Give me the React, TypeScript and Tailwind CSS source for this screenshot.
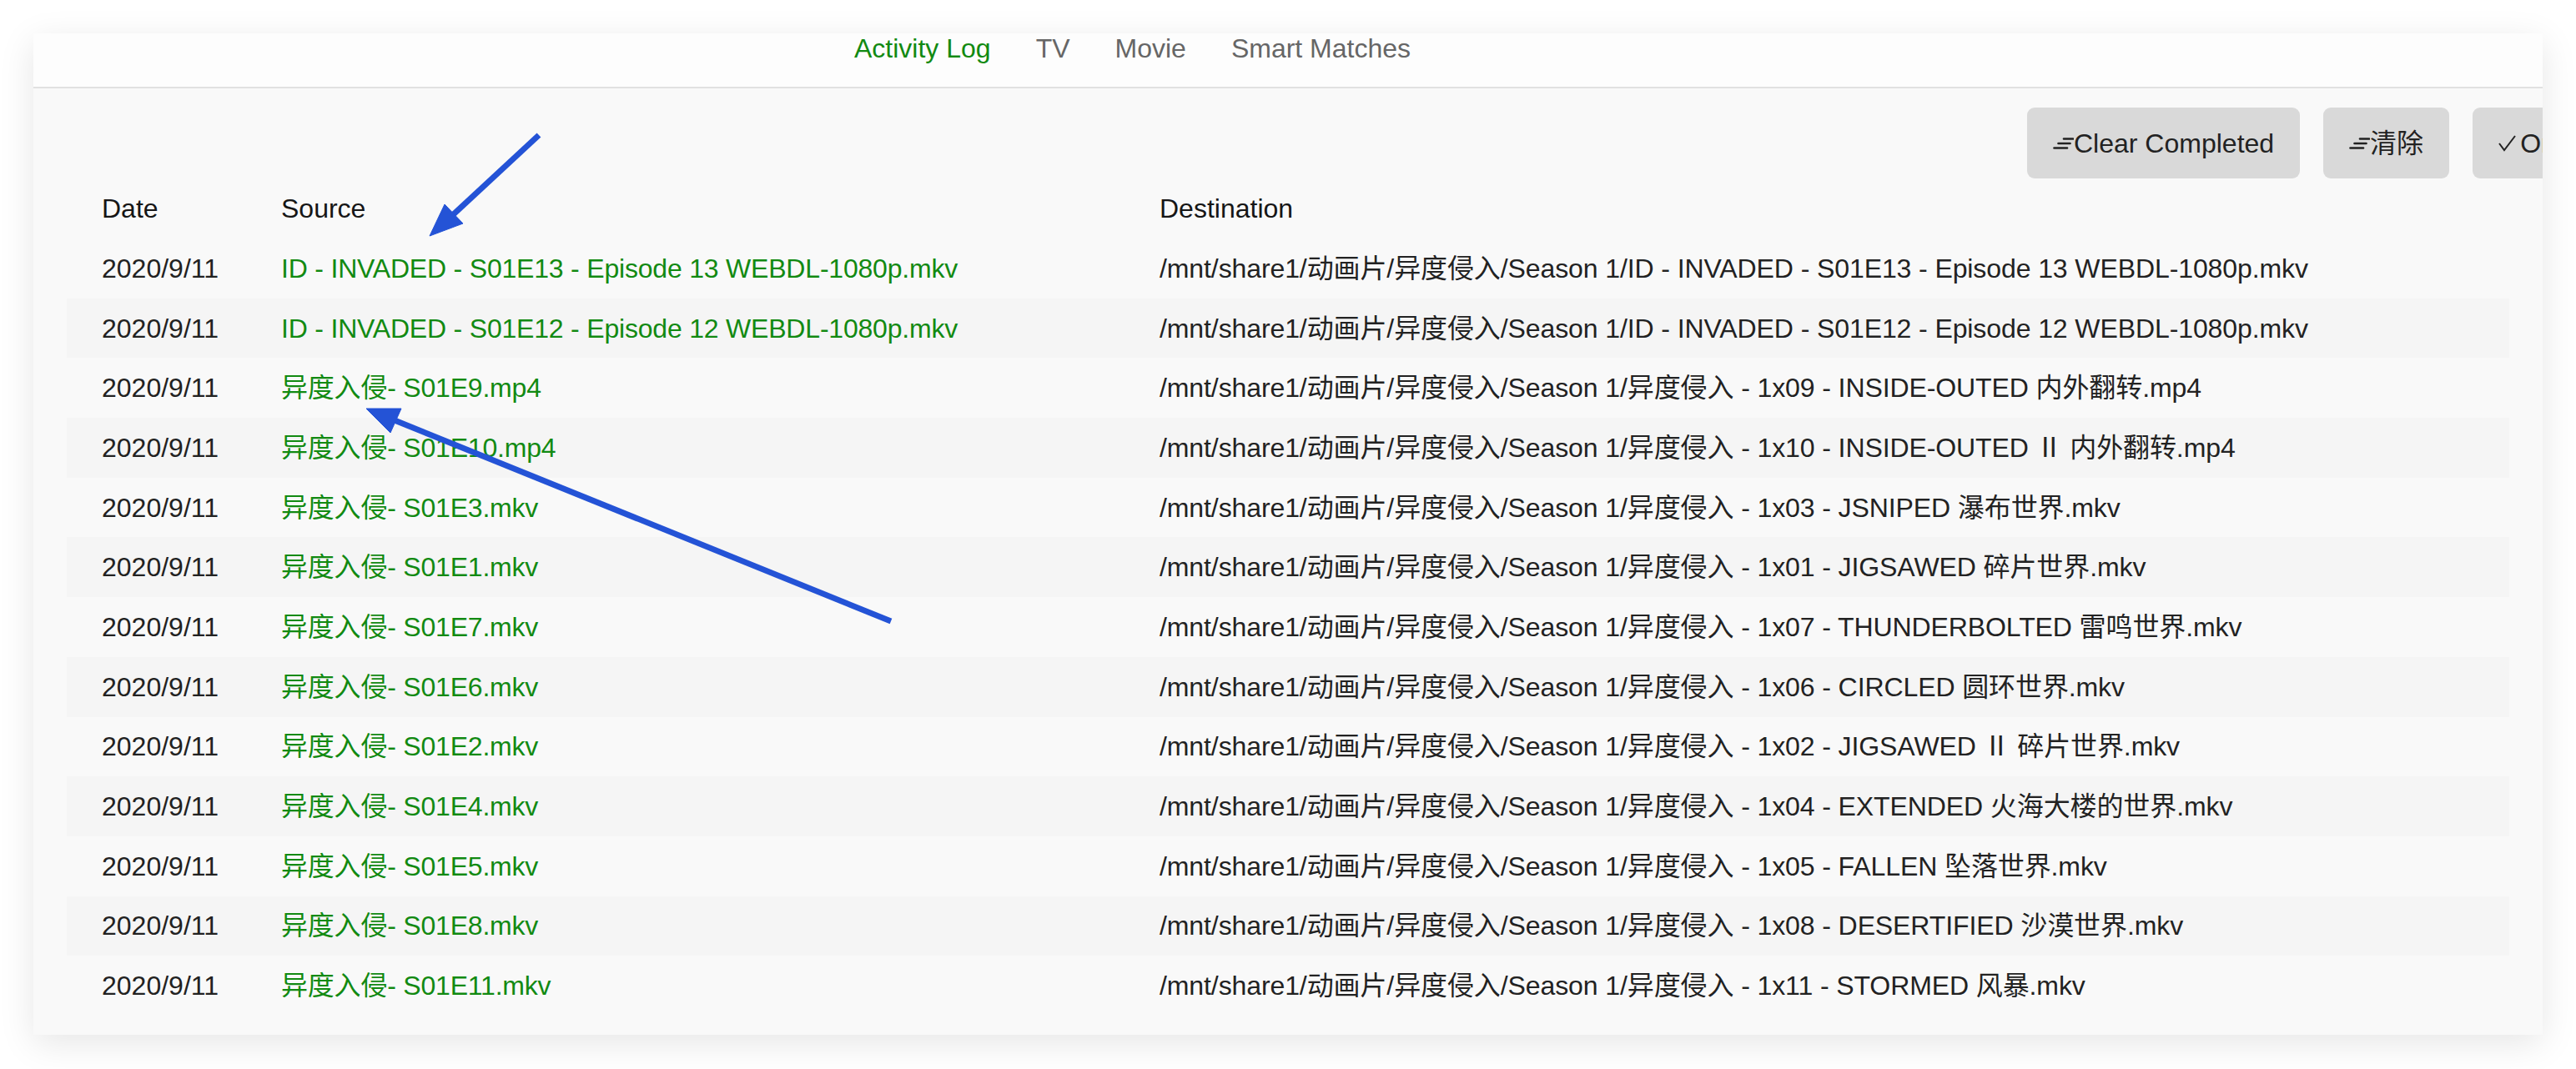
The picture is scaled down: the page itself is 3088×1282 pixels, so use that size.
const FONT = "font-['Liberation_Sans','Noto_Sans_CJK_SC',sans-serif]";

const tabs = [
  { label: "Activity Log", active: true },
  { label: "TV", active: false },
  { label: "Movie", active: false },
  { label: "Smart Matches", active: false },
];

const base = "/mnt/share1/动画片/异度侵入/Season 1/";

const rows = [
  { source: "ID - INVADED - S01E13 - Episode 13 WEBDL-1080p.mkv", dest: "ID - INVADED - S01E13 - Episode 13 WEBDL-1080p.mkv" },
  { source: "ID - INVADED - S01E12 - Episode 12 WEBDL-1080p.mkv", dest: "ID - INVADED - S01E12 - Episode 12 WEBDL-1080p.mkv" },
  { source: "异度入侵- S01E9.mp4", dest: "异度侵入 - 1x09 - INSIDE-OUTED 内外翻转.mp4" },
  { source: "异度入侵- S01E10.mp4", dest: "异度侵入 - 1x10 - INSIDE-OUTED Ⅱ 内外翻转.mp4" },
  { source: "异度入侵- S01E3.mkv", dest: "异度侵入 - 1x03 - JSNIPED 瀑布世界.mkv" },
  { source: "异度入侵- S01E1.mkv", dest: "异度侵入 - 1x01 - JIGSAWED 碎片世界.mkv" },
  { source: "异度入侵- S01E7.mkv", dest: "异度侵入 - 1x07 - THUNDERBOLTED 雷鸣世界.mkv" },
  { source: "异度入侵- S01E6.mkv", dest: "异度侵入 - 1x06 - CIRCLED 圆环世界.mkv" },
  { source: "异度入侵- S01E2.mkv", dest: "异度侵入 - 1x02 - JIGSAWED Ⅱ 碎片世界.mkv" },
  { source: "异度入侵- S01E4.mkv", dest: "异度侵入 - 1x04 - EXTENDED 火海大楼的世界.mkv" },
  { source: "异度入侵- S01E5.mkv", dest: "异度侵入 - 1x05 - FALLEN 坠落世界.mkv" },
  { source: "异度入侵- S01E8.mkv", dest: "异度侵入 - 1x08 - DESERTIFIED 沙漠世界.mkv" },
  { source: "异度入侵- S01E11.mkv", dest: "异度侵入 - 1x11 - STORMED 风暴.mkv" },
];

function ListIcon() {
  return (
    <svg width="25" height="20" viewBox="0 0 25 20" className="shrink-0">
      <g stroke="#222" strokeWidth="2.6" strokeLinecap="round">
        <line x1="13" y1="4.5" x2="24" y2="4.5" />
        <line x1="6.5" y1="10" x2="20.5" y2="10" />
        <line x1="1.5" y1="15.5" x2="17" y2="15.5" />
      </g>
    </svg>
  );
}

function CheckIcon() {
  return (
    <svg width="26" height="20" viewBox="0 0 26 20" className="shrink-0">
      <polyline points="1,10 7,18 20,1" fill="none" stroke="#222" strokeWidth="2" />
    </svg>
  );
}

function ActionButton({ icon, label }: { icon: "list" | "check"; label: string }) {
  return (
    <button className="flex h-[85px] shrink-0 items-center rounded-[9px] bg-[#d9d9d9] px-[31px] text-[32px] text-[#222] whitespace-nowrap">
      {icon === "list" ? <ListIcon /> : <CheckIcon />}
      <span>{label}</span>
    </button>
  );
}

function Arrows() {
  return (
    <svg
      width="3088"
      height="1282"
      viewBox="0 0 3088 1282"
      className="pointer-events-none absolute left-0 top-0"
    >
      <g fill="#2453d6" stroke="#2453d6">
        <line x1="646" y1="162" x2="535" y2="265" strokeWidth="7" />
        <polygon points="515,283 533,245 555,268" strokeWidth="1" />
        <line x1="1068" y1="745" x2="468" y2="502" strokeWidth="7" />
        <polygon points="439,490 481,490 468,519" strokeWidth="1" />
      </g>
    </svg>
  );
}

export default function App() {
  return (
    <div className={`relative h-[1282px] w-[3088px] overflow-hidden bg-white ${FONT}`}>
      <div className="mx-[40px] mt-[40px] overflow-hidden bg-[#f9f9f9] shadow-[0_10px_40px_rgba(0,0,0,0.10)]">
        <div className="h-[66px] border-b-2 border-[#e1e1e1] bg-[#fdfdfd]">
          <div className="flex gap-[54px] pl-[984px] text-[32px] leading-[36px]">
            {tabs.map((t) => (
              <span key={t.label} className={t.active ? "text-[#128a12]" : "text-[#666]"}>
                {t.label}
              </span>
            ))}
          </div>
        </div>

        <div className="pt-[23px] pb-[23px]">
          <div className="flex gap-[28px] pl-[2390px]">
            <ActionButton icon="list" label="Clear Completed" />
            <ActionButton icon="list" label="清除" />
            <ActionButton icon="check" label="Only Errors" />
          </div>

          <div className="mx-[40px] text-[32px]">
            <div className="grid h-[72px] grid-cols-[215px_1053px_1fr] items-center text-[#161616]">
              <div className="pl-[42px]">Date</div>
              <div className="pl-[42px]">Source</div>
              <div className="pl-[42px]">Destination</div>
            </div>
            {rows.map((r, i) => (
              <div
                key={i}
                className={`grid h-[71.7px] grid-cols-[215px_1053px_1fr] items-center whitespace-nowrap ${
                  i % 2 === 1 ? "bg-[#f5f5f5]" : ""
                }`}
              >
                <div className="pl-[42px] text-[#222]">2020/9/11</div>
                <div className="pl-[42px] tracking-[-0.2px] text-[#128a12]">{r.source}</div>
                <div className="pl-[42px] tracking-[-0.1px] text-[#222]">{base + r.dest}</div>
              </div>
            ))}
          </div>
        </div>
      </div>
      <Arrows />
    </div>
  );
}
